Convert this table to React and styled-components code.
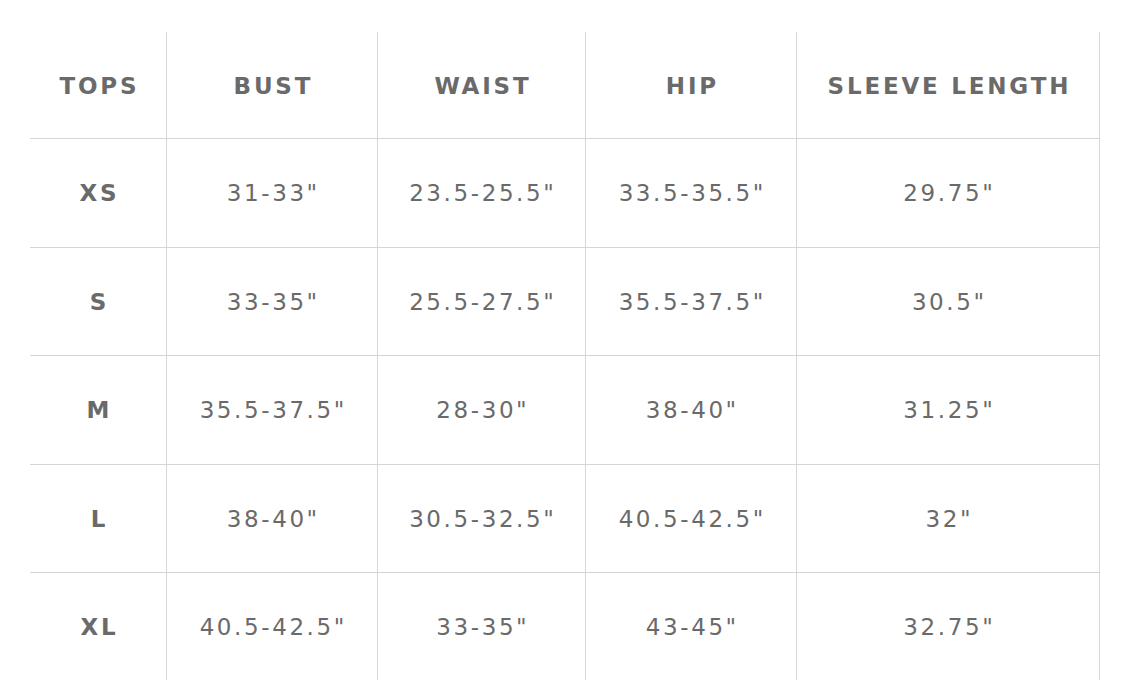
import React from "react";
import styled, { createGlobalStyle } from "styled-components";

const columns = ["TOPS", "BUST", "WAIST", "HIP", "SLEEVE LENGTH"];

const rows = [
  ["XS", '31-33"', '23.5-25.5"', '33.5-35.5"', '29.75"'],
  ["S", '33-35"', '25.5-27.5"', '35.5-37.5"', '30.5"'],
  ["M", '35.5-37.5"', '28-30"', '38-40"', '31.25"'],
  ["L", '38-40"', '30.5-32.5"', '40.5-42.5"', '32"'],
  ["XL", '40.5-42.5"', '33-35"', '43-45"', '32.75"'],
];

const App = () => {
  return (
    <>
      <GlobalStyle />
      <Page>
        <SizeGrid>
          {columns.map((label, i) => (
            <HeadCell key={label} col={i}>
              {label}
            </HeadCell>
          ))}
          {rows.map((row) =>
            row.map((value, i) => (
              <BodyCell key={row[0] + i} col={i} label={i === 0}>
                {value}
              </BodyCell>
            ))
          )}
        </SizeGrid>
      </Page>
    </>
  );
};

export default App;

const GlobalStyle = createGlobalStyle`
  html, body {
    margin: 0;
    padding: 0;
    background: #ffffff;
  }
  body {
    font-family: "DejaVu Sans", "Liberation Sans", sans-serif;
    overflow: hidden;
  }
`;

const Page = styled.div`
  padding: 32px 0 0 30px;
`;

const SizeGrid = styled.div`
  display: grid;
  grid-template-columns: 136px 211px 208px 211px 304px;
  color: #6a6a6a;
`;

const Cell = styled.div`
  box-sizing: border-box;
  display: flex;
  align-items: center;
  justify-content: center;
  border-left: ${(props) => (props.col > 0 ? "1px solid #d6d6d6" : "none")};
  border-right: ${(props) => (props.col === 4 ? "1px solid #d6d6d6" : "none")};
  white-space: nowrap;
`;

const HeadCell = styled(Cell)`
  height: 106px;
  padding-top: 2px;
  font-size: 23px;
  font-weight: 700;
  letter-spacing: 2.8px;
  text-indent: 2.8px;
`;

const BodyCell = styled(Cell)`
  height: 108.5px;
  border-top: 1px solid #d6d6d6;
  padding-top: 1px;
  font-size: ${(props) => (props.label ? "23px" : "23px")};
  font-weight: ${(props) => (props.label ? 700 : 400)};
  letter-spacing: ${(props) => (props.label ? "2.8px" : "2.6px")};
  text-indent: ${(props) => (props.label ? "2.8px" : "2.6px")};
`;
